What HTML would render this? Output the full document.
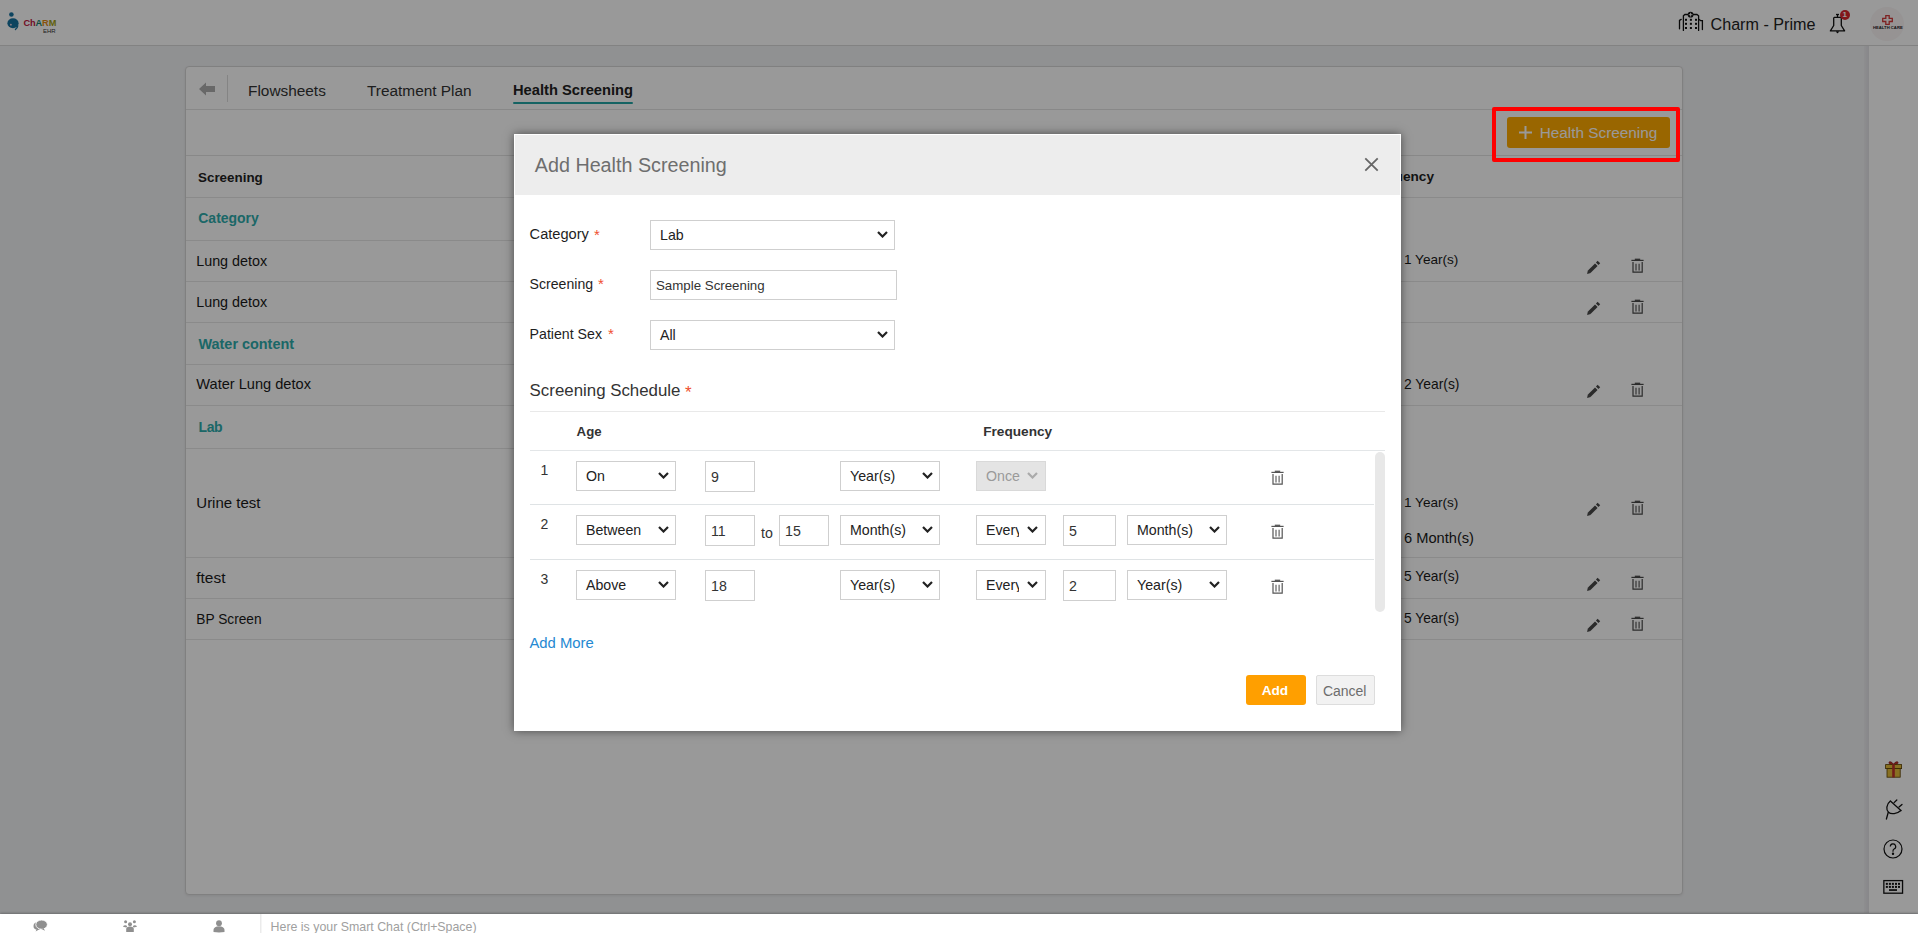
<!DOCTYPE html>
<html><head><meta charset="utf-8">
<style>
html,body{margin:0;padding:0;}
body{width:1918px;height:933px;position:relative;overflow:hidden;background:#f1f2f4;font-family:"Liberation Sans",sans-serif;}
.t{position:absolute;white-space:nowrap;font-family:"Liberation Sans",sans-serif;}
</style></head><body>
<div style="position:absolute;left:0px;top:0px;width:1918px;height:45px;background:#fff;"></div>
<div style="position:absolute;left:0px;top:45px;width:1918px;height:1px;background:#d9d9d9;"></div>
<div style="position:absolute;left:1864px;top:46px;width:5px;height:867px;background:linear-gradient(to right,#ececef,#e2e2e6);"></div>
<div style="position:absolute;left:1869px;top:46px;width:49px;height:867px;background:#fff;"></div>
<svg style="position:absolute;left:3px;top:8px" width="20" height="26" viewBox="0 0 20 26">
<circle cx="8.4" cy="6.5" r="2.3" fill="#17729f"/>
<ellipse cx="10" cy="15.3" rx="5.6" ry="5" fill="#17729f"/>
<path d="M14.8 17.5 C14.5 19.5 13.5 21 12 21.8" stroke="#17729f" stroke-width="1.6" fill="none"/>
<circle cx="7.9" cy="16.7" r="0.9" fill="#f4d0dc"/>
</svg>
<div class="t" style="left:23.5px;top:18px;font-size:9.2px;line-height:10px;font-weight:bold;letter-spacing:-0.1px"><span style="color:#c0173f">Ch</span><span style="color:#17836f">A</span><span style="color:#e38a12">R</span><span style="color:#a0a012">M</span></div>
<div class="t" style="left:43px;top:27.5px;font-size:6px;line-height:7px;color:#333;">EHR</div>
<svg style="position:absolute;left:1674px;top:6px" width="32" height="28" viewBox="0 0 32 28" fill="none" stroke="#111" stroke-width="1.3" stroke-linecap="round">
<path d="M9.4 24.4 V9.8 L10.9 8.5 H14.5 M18.7 8.5 H22.9 L24.6 9.8 V24.4"/>
<path d="M5.5 22.8 V14.4 L7.2 13.4"/><path d="M25 13.4 L26.6 14.6 H28.4 V23.5"/>
<circle cx="16.6" cy="8.7" r="2.9" fill="#111" stroke="none"/>
<path d="M16.6 7.2 V10.2 M15.1 8.7 H18.1" stroke="#fff" stroke-width="0.9"/>
<g fill="#111" stroke="none"><rect x="11" y="12.8" width="2" height="2"/><rect x="15.9" y="12.8" width="2" height="2"/><rect x="21" y="12.8" width="2" height="2"/>
<rect x="11" y="16.8" width="2" height="2"/><rect x="15.9" y="16.8" width="2" height="2"/><rect x="21" y="16.8" width="2" height="2"/>
<rect x="11" y="21" width="2" height="2"/><rect x="15.9" y="21" width="2" height="2"/><rect x="21" y="21" width="2" height="2"/></g>
</svg>
<div class="t" style="left:1710.5px;top:16.23px;font-size:16.15px;line-height:16.15px;color:#222;font-weight:normal;">Charm - Prime</div>
<svg style="position:absolute;left:1829px;top:13px" width="18" height="21" viewBox="0 0 18 21" fill="none" stroke="#111" stroke-width="1.3" stroke-linejoin="round">
<path d="M8.5 1.5 v2.5"/><path d="M7 1.5 h3"/>
<path d="M5.6 4.3 H11.4 L12.3 5 V12.5 L15.6 17.9 H1.4 L4.7 12.5 V5 Z"/>
<path d="M7.5 18.3 L8.5 19.6 L9.5 18.3"/>
</svg>
<div style="position:absolute;left:1839.5px;top:9.8px;width:10.6px;height:10.6px;border-radius:50%;background:#d9262e;color:#fff;font-size:8px;line-height:10.6px;text-align:center;font-weight:bold;font-family:'Liberation Sans',sans-serif">1</div>
<div style="position:absolute;left:1870px;top:7px;width:34px;height:34px;border-radius:50%;background:#faf5f5;"></div>
<svg style="position:absolute;left:1881.5px;top:14.5px" width="11" height="10" viewBox="0 0 11 10" fill="none" stroke="#d23a3a" stroke-width="1.3">
<path d="M3.8 0.7 h3.4 v2.6 h3.1 v3.2 h-3.1 v2.8 h-3.4 v-2.8 h-3.1 v-3.2 h3.1 z"/></svg>
<div class="t" style="left:1873px;top:25.5px;font-size:4.2px;line-height:4px;font-weight:bold;color:#222;width:28px;text-align:center">HEALTH CARE</div>
<div style="position:absolute;left:185px;top:66px;width:1498px;height:829px;background:#fff;border:1px solid #d6d6d6;border-radius:4px;box-sizing:border-box;box-shadow:0 1px 3px rgba(0,0,0,0.08);"></div>
<svg style="position:absolute;left:199px;top:82px" width="17" height="14" viewBox="0 0 17 14">
<path d="M0 7 L7 0.5 V4 H16 V10 H7 V13.5 Z" fill="#adadad"/></svg>
<div style="position:absolute;left:227px;top:75px;width:1px;height:27px;background:#ddd;"></div>
<div class="t" style="left:248px;top:82.76px;font-size:15.4px;line-height:15.4px;color:#333;font-weight:normal;">Flowsheets</div>
<div class="t" style="left:367px;top:82.76px;font-size:15.4px;line-height:15.4px;color:#333;font-weight:normal;">Treatment Plan</div>
<div class="t" style="left:513px;top:83.36px;font-size:14.7px;line-height:14.7px;color:#222;font-weight:bold;">Health Screening</div>
<div style="position:absolute;left:512.5px;top:101.5px;width:120.5px;height:2.5px;background:#23a6a6;border-radius:1px;"></div>
<div style="position:absolute;left:186px;top:109px;width:1496px;height:1px;background:#e3e3e3;"></div>
<div style="position:absolute;left:186px;top:155px;width:1496px;height:1px;background:#e3e3e3;"></div>
<div style="position:absolute;left:1507px;top:117px;width:163px;height:31px;background:#ffab00;border-radius:3px;"></div>
<svg style="position:absolute;left:1518.5px;top:125.5px" width="13" height="13" viewBox="0 0 13 13" stroke="#fff" stroke-width="2"><path d="M6.5 0 V13 M0 6.5 H13"/></svg>
<div class="t" style="left:1539.7px;top:125.31px;font-size:15.34px;line-height:15.34px;color:#fff;font-weight:normal;">Health Screening</div>
<div class="t" style="left:198px;top:171.16px;font-size:13.4px;line-height:13.4px;color:#222;font-weight:bold;">Screening</div>
<div class="t" style="left:1365px;top:170.25px;font-size:13.65px;line-height:13.65px;color:#222;font-weight:bold;">Frequency</div>
<div style="position:absolute;left:186px;top:197px;width:1496px;height:1px;background:#e6e6e6;"></div>
<div style="position:absolute;left:186px;top:281px;width:1496px;height:1px;background:#e6e6e6;"></div>
<div style="position:absolute;left:186px;top:322px;width:1496px;height:1px;background:#e6e6e6;"></div>
<div style="position:absolute;left:186px;top:405px;width:1496px;height:1px;background:#e6e6e6;"></div>
<div style="position:absolute;left:186px;top:557px;width:1496px;height:1px;background:#e6e6e6;"></div>
<div style="position:absolute;left:186px;top:598px;width:1496px;height:1px;background:#e6e6e6;"></div>
<div style="position:absolute;left:186px;top:639px;width:1496px;height:1px;background:#e6e6e6;"></div>
<div style="position:absolute;left:186px;top:240px;width:1200px;height:1px;background:#e6e6e6;"></div>
<div style="position:absolute;left:186px;top:364px;width:1200px;height:1px;background:#e6e6e6;"></div>
<div style="position:absolute;left:186px;top:448px;width:1200px;height:1px;background:#e6e6e6;"></div>
<div class="t" style="left:198.3px;top:212.48px;font-size:13.96px;line-height:13.96px;color:#2eacac;font-weight:bold;">Category</div>
<div class="t" style="left:196.2px;top:253.65px;font-size:14.35px;line-height:14.35px;color:#1a1a1a;font-weight:normal;">Lung detox</div>
<div class="t" style="left:196.2px;top:294.85px;font-size:14.35px;line-height:14.35px;color:#1a1a1a;font-weight:normal;">Lung detox</div>
<div class="t" style="left:198.5px;top:336.79px;font-size:14.42px;line-height:14.42px;color:#2eacac;font-weight:bold;">Water content</div>
<div class="t" style="left:196.3px;top:377.44px;font-size:14.6px;line-height:14.6px;color:#1a1a1a;font-weight:normal;">Water Lung detox</div>
<div class="t" style="left:198.5px;top:419.95px;font-size:14px;line-height:14px;color:#2eacac;font-weight:bold;letter-spacing:-0.4px;">Lab</div>
<div class="t" style="left:196.3px;top:494.90px;font-size:15.0px;line-height:15.0px;color:#1a1a1a;font-weight:normal;">Urine test</div>
<div class="t" style="left:196.3px;top:569.52px;font-size:15.45px;line-height:15.45px;color:#1a1a1a;font-weight:normal;">ftest</div>
<div class="t" style="left:196.3px;top:612.79px;font-size:13.71px;line-height:13.71px;color:#1a1a1a;font-weight:normal;">BP Screen</div>
<div class="t" style="left:1404px;top:253.30px;font-size:13.59px;line-height:13.59px;color:#1a1a1a;font-weight:normal;">1 Year(s)</div>
<div class="t" style="left:1404px;top:377.76px;font-size:13.87px;line-height:13.87px;color:#1a1a1a;font-weight:normal;">2 Year(s)</div>
<div class="t" style="left:1404px;top:495.50px;font-size:13.59px;line-height:13.59px;color:#1a1a1a;font-weight:normal;">1 Year(s)</div>
<div class="t" style="left:1404px;top:530.60px;font-size:14.65px;line-height:14.65px;color:#1a1a1a;font-weight:normal;">6 Month(s)</div>
<div class="t" style="left:1404px;top:570.33px;font-size:13.79px;line-height:13.79px;color:#1a1a1a;font-weight:normal;">5 Year(s)</div>
<div class="t" style="left:1404px;top:611.63px;font-size:13.79px;line-height:13.79px;color:#1a1a1a;font-weight:normal;">5 Year(s)</div>
<svg style="position:absolute;left:1586px;top:260px" width="15" height="15" viewBox="0 0 15 15"><path d="M1.1 13.9 L1.9 10.3 L4.7 13.1 Z" fill="#484848"/><path d="M3.2 11.8 L10.3 4.7" stroke="#484848" stroke-width="3.6"/><path d="M11.2 3.8 L12.9 2.1" stroke="#484848" stroke-width="3.6"/></svg>
<svg style="position:absolute;left:1630.5px;top:257.8px" width="13" height="15" viewBox="0 0 13 15" fill="none" stroke="#4a4a4a"><path d="M0.4 2.4 H12.6" stroke-width="1.2"/><path d="M3.8 1.3 H9.2" stroke-width="1.3"/><path d="M2 3.9 V14.1 H11.2 V3.9" stroke-width="1.2"/><path d="M5 5.8 V12.6 M8.1 5.8 V12.6" stroke-width="1.1"/></svg>
<svg style="position:absolute;left:1586px;top:301px" width="15" height="15" viewBox="0 0 15 15"><path d="M1.1 13.9 L1.9 10.3 L4.7 13.1 Z" fill="#484848"/><path d="M3.2 11.8 L10.3 4.7" stroke="#484848" stroke-width="3.6"/><path d="M11.2 3.8 L12.9 2.1" stroke="#484848" stroke-width="3.6"/></svg>
<svg style="position:absolute;left:1630.5px;top:298.8px" width="13" height="15" viewBox="0 0 13 15" fill="none" stroke="#4a4a4a"><path d="M0.4 2.4 H12.6" stroke-width="1.2"/><path d="M3.8 1.3 H9.2" stroke-width="1.3"/><path d="M2 3.9 V14.1 H11.2 V3.9" stroke-width="1.2"/><path d="M5 5.8 V12.6 M8.1 5.8 V12.6" stroke-width="1.1"/></svg>
<svg style="position:absolute;left:1586px;top:384px" width="15" height="15" viewBox="0 0 15 15"><path d="M1.1 13.9 L1.9 10.3 L4.7 13.1 Z" fill="#484848"/><path d="M3.2 11.8 L10.3 4.7" stroke="#484848" stroke-width="3.6"/><path d="M11.2 3.8 L12.9 2.1" stroke="#484848" stroke-width="3.6"/></svg>
<svg style="position:absolute;left:1630.5px;top:381.8px" width="13" height="15" viewBox="0 0 13 15" fill="none" stroke="#4a4a4a"><path d="M0.4 2.4 H12.6" stroke-width="1.2"/><path d="M3.8 1.3 H9.2" stroke-width="1.3"/><path d="M2 3.9 V14.1 H11.2 V3.9" stroke-width="1.2"/><path d="M5 5.8 V12.6 M8.1 5.8 V12.6" stroke-width="1.1"/></svg>
<svg style="position:absolute;left:1586px;top:502px" width="15" height="15" viewBox="0 0 15 15"><path d="M1.1 13.9 L1.9 10.3 L4.7 13.1 Z" fill="#484848"/><path d="M3.2 11.8 L10.3 4.7" stroke="#484848" stroke-width="3.6"/><path d="M11.2 3.8 L12.9 2.1" stroke="#484848" stroke-width="3.6"/></svg>
<svg style="position:absolute;left:1630.5px;top:499.8px" width="13" height="15" viewBox="0 0 13 15" fill="none" stroke="#4a4a4a"><path d="M0.4 2.4 H12.6" stroke-width="1.2"/><path d="M3.8 1.3 H9.2" stroke-width="1.3"/><path d="M2 3.9 V14.1 H11.2 V3.9" stroke-width="1.2"/><path d="M5 5.8 V12.6 M8.1 5.8 V12.6" stroke-width="1.1"/></svg>
<svg style="position:absolute;left:1586px;top:577px" width="15" height="15" viewBox="0 0 15 15"><path d="M1.1 13.9 L1.9 10.3 L4.7 13.1 Z" fill="#484848"/><path d="M3.2 11.8 L10.3 4.7" stroke="#484848" stroke-width="3.6"/><path d="M11.2 3.8 L12.9 2.1" stroke="#484848" stroke-width="3.6"/></svg>
<svg style="position:absolute;left:1630.5px;top:574.8px" width="13" height="15" viewBox="0 0 13 15" fill="none" stroke="#4a4a4a"><path d="M0.4 2.4 H12.6" stroke-width="1.2"/><path d="M3.8 1.3 H9.2" stroke-width="1.3"/><path d="M2 3.9 V14.1 H11.2 V3.9" stroke-width="1.2"/><path d="M5 5.8 V12.6 M8.1 5.8 V12.6" stroke-width="1.1"/></svg>
<svg style="position:absolute;left:1586px;top:618px" width="15" height="15" viewBox="0 0 15 15"><path d="M1.1 13.9 L1.9 10.3 L4.7 13.1 Z" fill="#484848"/><path d="M3.2 11.8 L10.3 4.7" stroke="#484848" stroke-width="3.6"/><path d="M11.2 3.8 L12.9 2.1" stroke="#484848" stroke-width="3.6"/></svg>
<svg style="position:absolute;left:1630.5px;top:615.8px" width="13" height="15" viewBox="0 0 13 15" fill="none" stroke="#4a4a4a"><path d="M0.4 2.4 H12.6" stroke-width="1.2"/><path d="M3.8 1.3 H9.2" stroke-width="1.3"/><path d="M2 3.9 V14.1 H11.2 V3.9" stroke-width="1.2"/><path d="M5 5.8 V12.6 M8.1 5.8 V12.6" stroke-width="1.1"/></svg>
<svg style="position:absolute;left:1875px;top:755px" width="36" height="70" viewBox="0 0 36 70">
<path d="M18.5 9.8 C15 9.5 13.5 8.5 14 7.3 C14.6 6 17 7 18.5 9.2 C20 7 22.4 6 23 7.3 C23.5 8.5 22 9.5 18.5 9.8 Z" fill="#c0302a" stroke="#8a1a1a" stroke-width="0.8"/>
<rect x="10.6" y="9.6" width="16" height="4" fill="#e3bb3a" stroke="#5a4000" stroke-width="0.8"/>
<rect x="12" y="13.6" width="13.2" height="8.6" fill="#e3bb3a" stroke="#5a4000" stroke-width="0.8"/>
<rect x="17.2" y="9.2" width="2.6" height="13.2" fill="#c0302a"/>
<g fill="none" stroke="#111" stroke-width="1.3" stroke-linecap="round">
<path d="M15.4 46.1 L25.9 55.5"/><path d="M15.4 46.1 C11 49.5 11 55 13.5 57.3 C16 59.6 22 59 25.9 55.5"/>
<path d="M19.1 47.6 L21.8 45 M24 52.1 L27 49.5"/><path d="M13.2 57.5 L11.4 64"/></g>
</svg>
<svg style="position:absolute;left:1882px;top:838px" width="22" height="22" viewBox="0 0 22 22" fill="none" stroke="#111" stroke-width="1.2"><circle cx="11" cy="11" r="9"/><path d="M8.3 8.5 a2.7 2.7 0 1 1 3.8 2.5 c-0.8 0.4 -1.1 1 -1.1 2 v0.8" /><circle cx="11" cy="15.8" r="0.6" fill="#111"/></svg>
<svg style="position:absolute;left:1883px;top:879px" width="21" height="16" viewBox="0 0 21 16"><rect x="0.85" y="1.6" width="18.7" height="12.6" fill="none" stroke="#111" stroke-width="1.3"/><g fill="#111"><rect x="2.85" y="3.85" width="2" height="2"/><rect x="5.9" y="3.85" width="2" height="2"/><rect x="8.9" y="3.85" width="2" height="2"/><rect x="12" y="3.85" width="2" height="2"/><rect x="15" y="3.85" width="2" height="2"/><rect x="2.85" y="6.9" width="2" height="2"/><rect x="5.9" y="6.9" width="2" height="2"/><rect x="8.9" y="6.9" width="2" height="2"/><rect x="12" y="6.9" width="2" height="2"/><rect x="15" y="6.9" width="2" height="2"/><rect x="6" y="10.2" width="8" height="1.7"/></g></svg>
<div style="position:absolute;left:0px;top:0px;width:1918px;height:933px;background:rgba(0,0,0,0.4);"></div>
<div style="position:absolute;left:514px;top:134px;width:887px;height:597px;background:#fff;box-shadow:0 0 9px rgba(0,0,0,0.5);"></div>
<div style="position:absolute;left:515px;top:135px;width:885px;height:60px;background:#ededed;"></div>
<div class="t" style="left:534.8px;top:155.89px;font-size:19.74px;line-height:19.74px;color:#6e6e6e;font-weight:normal;">Add Health Screening</div>
<svg style="position:absolute;left:1363.5px;top:156.5px" width="15" height="15" viewBox="0 0 15 15" stroke="#666" stroke-width="1.8"><path d="M1.3 1.3 L13.7 13.7 M13.7 1.3 L1.3 13.7"/></svg>
<div class="t" style="left:529.6px;top:227.01px;font-size:14.64px;line-height:14.64px;color:#1e1e1e;font-weight:normal;">Category</div>
<div class="t" style="left:594px;top:226.70px;font-size:15px;line-height:15px;color:#ef5030;font-weight:normal;">*</div>
<div class="t" style="left:529.6px;top:277.06px;font-size:14.1px;line-height:14.1px;color:#1e1e1e;font-weight:normal;">Screening</div>
<div class="t" style="left:598px;top:276.30px;font-size:15px;line-height:15px;color:#ef5030;font-weight:normal;">*</div>
<div class="t" style="left:529.6px;top:326.61px;font-size:14.16px;line-height:14.16px;color:#1e1e1e;font-weight:normal;">Patient Sex</div>
<div class="t" style="left:608px;top:325.90px;font-size:15px;line-height:15px;color:#ef5030;font-weight:normal;">*</div>
<div style="position:absolute;left:650px;top:220px;width:245px;height:30px;background:#fff;border:1px solid #cfcfcf;box-sizing:border-box;"></div>
<div class="t" style="left:660px;top:228.18px;font-size:14.2px;line-height:14.2px;color:#222;font-weight:normal;">Lab</div>
<svg style="position:absolute;left:877px;top:231.0px" width="11" height="7" viewBox="0 0 11 7" fill="none" stroke="#222" stroke-width="2.2"><path d="M1 1 L5.5 5.5 L10 1"/></svg>
<div style="position:absolute;left:650px;top:270px;width:247px;height:30px;background:#fff;border:1px solid #cfcfcf;box-sizing:border-box;"></div>
<div class="t" style="left:656px;top:278.94px;font-size:13.3px;line-height:13.3px;color:#333;font-weight:normal;">Sample Screening</div>
<div style="position:absolute;left:650px;top:320px;width:245px;height:30px;background:#fff;border:1px solid #cfcfcf;box-sizing:border-box;"></div>
<div class="t" style="left:660px;top:328.18px;font-size:14.2px;line-height:14.2px;color:#222;font-weight:normal;">All</div>
<svg style="position:absolute;left:877px;top:331.0px" width="11" height="7" viewBox="0 0 11 7" fill="none" stroke="#222" stroke-width="2.2"><path d="M1 1 L5.5 5.5 L10 1"/></svg>
<div class="t" style="left:529.6px;top:382.52px;font-size:16.87px;line-height:16.87px;color:#333;font-weight:normal;">Screening Schedule</div>
<div class="t" style="left:685px;top:383.61px;font-size:17px;line-height:17px;color:#ef5030;font-weight:normal;">*</div>
<div style="position:absolute;left:530px;top:411px;width:855px;height:1px;background:#e9e9e9;"></div>
<div class="t" style="left:576.6px;top:425.00px;font-size:13.23px;line-height:13.23px;color:#333;font-weight:bold;">Age</div>
<div class="t" style="left:983.2px;top:424.75px;font-size:13.65px;line-height:13.65px;color:#333;font-weight:bold;">Frequency</div>
<div style="position:absolute;left:530px;top:450px;width:855px;height:1px;background:#e3e6e8;"></div>
<div style="position:absolute;left:530px;top:504px;width:844px;height:1px;background:#dfe3e5;"></div>
<div style="position:absolute;left:530px;top:559px;width:844px;height:1px;background:#dfe3e5;"></div>
<div style="position:absolute;left:1374.5px;top:451.5px;width:10px;height:160px;background:#e8e8e8;border-radius:5px;"></div>
<div class="t" style="left:540.6px;top:462.95px;font-size:14px;line-height:14px;color:#333;font-weight:normal;">1</div>
<div style="position:absolute;left:576px;top:461px;width:100px;height:29.5px;background:#fff;border:1px solid #cfcfcf;box-sizing:border-box;"></div>
<div class="t" style="left:586px;top:468.93px;font-size:14.2px;line-height:14.2px;color:#222;font-weight:normal;">On</div>
<svg style="position:absolute;left:658px;top:471.75px" width="11" height="7" viewBox="0 0 11 7" fill="none" stroke="#222" stroke-width="2.2"><path d="M1 1 L5.5 5.5 L10 1"/></svg>
<div style="position:absolute;left:705px;top:461px;width:50px;height:31px;background:#fff;border:1px solid #cfcfcf;box-sizing:border-box;"></div>
<div class="t" style="left:711px;top:469.68px;font-size:14.2px;line-height:14.2px;color:#333;font-weight:normal;">9</div>
<div style="position:absolute;left:840px;top:461px;width:100px;height:29.5px;background:#fff;border:1px solid #cfcfcf;box-sizing:border-box;"></div>
<div class="t" style="left:850px;top:468.93px;font-size:14.2px;line-height:14.2px;color:#222;font-weight:normal;">Year(s)</div>
<svg style="position:absolute;left:922px;top:471.75px" width="11" height="7" viewBox="0 0 11 7" fill="none" stroke="#222" stroke-width="2.2"><path d="M1 1 L5.5 5.5 L10 1"/></svg>
<div style="position:absolute;left:976px;top:461px;width:70px;height:29.5px;background:#e4e4e4;border:1px solid #d9d9d9;box-sizing:border-box;"></div>
<div class="t" style="left:986px;top:468.93px;font-size:14.2px;line-height:14.2px;color:#9a9a9a;font-weight:normal;">Once</div>
<svg style="position:absolute;left:1027px;top:471.75px" width="11" height="7" viewBox="0 0 11 7" fill="none" stroke="#aaa" stroke-width="2.2"><path d="M1 1 L5.5 5.5 L10 1"/></svg>
<svg style="position:absolute;left:1270.5px;top:469.5px" width="13" height="15" viewBox="0 0 13 15" fill="none" stroke="#555"><path d="M0.4 2.4 H12.6" stroke-width="1.2"/><path d="M3.8 1.3 H9.2" stroke-width="1.3"/><path d="M2 3.9 V14.1 H11.2 V3.9" stroke-width="1.2"/><path d="M5 5.8 V12.6 M8.1 5.8 V12.6" stroke-width="1.1"/></svg>
<div class="t" style="left:540.6px;top:516.95px;font-size:14px;line-height:14px;color:#333;font-weight:normal;">2</div>
<div style="position:absolute;left:576px;top:515px;width:100px;height:29.5px;background:#fff;border:1px solid #cfcfcf;box-sizing:border-box;"></div>
<div class="t" style="left:586px;top:522.93px;font-size:14.2px;line-height:14.2px;color:#222;font-weight:normal;">Between</div>
<svg style="position:absolute;left:658px;top:525.75px" width="11" height="7" viewBox="0 0 11 7" fill="none" stroke="#222" stroke-width="2.2"><path d="M1 1 L5.5 5.5 L10 1"/></svg>
<div style="position:absolute;left:705px;top:515px;width:50px;height:31px;background:#fff;border:1px solid #cfcfcf;box-sizing:border-box;"></div>
<div class="t" style="left:711px;top:523.68px;font-size:14.2px;line-height:14.2px;color:#333;font-weight:normal;">11</div>
<div class="t" style="left:761px;top:525.58px;font-size:14.2px;line-height:14.2px;color:#333;font-weight:normal;">to</div>
<div style="position:absolute;left:779px;top:515px;width:50px;height:31px;background:#fff;border:1px solid #cfcfcf;box-sizing:border-box;"></div>
<div class="t" style="left:785px;top:523.68px;font-size:14.2px;line-height:14.2px;color:#333;font-weight:normal;">15</div>
<div style="position:absolute;left:840px;top:515px;width:100px;height:29.5px;background:#fff;border:1px solid #cfcfcf;box-sizing:border-box;"></div>
<div class="t" style="left:850px;top:522.93px;font-size:14.2px;line-height:14.2px;color:#222;font-weight:normal;">Month(s)</div>
<svg style="position:absolute;left:922px;top:525.75px" width="11" height="7" viewBox="0 0 11 7" fill="none" stroke="#222" stroke-width="2.2"><path d="M1 1 L5.5 5.5 L10 1"/></svg>
<div style="position:absolute;left:976px;top:515px;width:70px;height:29.5px;background:#fff;border:1px solid #cfcfcf;box-sizing:border-box;"></div>
<div class="t" style="left:986px;top:522.93px;font-size:14.2px;line-height:14.2px;color:#222;font-weight:normal;width:33px;overflow:hidden;white-space:nowrap;">Every</div>
<svg style="position:absolute;left:1027px;top:525.75px" width="11" height="7" viewBox="0 0 11 7" fill="none" stroke="#222" stroke-width="2.2"><path d="M1 1 L5.5 5.5 L10 1"/></svg>
<div style="position:absolute;left:1063px;top:515px;width:53px;height:31px;background:#fff;border:1px solid #cfcfcf;box-sizing:border-box;"></div>
<div class="t" style="left:1069px;top:523.68px;font-size:14.2px;line-height:14.2px;color:#333;font-weight:normal;">5</div>
<div style="position:absolute;left:1127px;top:515px;width:100px;height:29.5px;background:#fff;border:1px solid #cfcfcf;box-sizing:border-box;"></div>
<div class="t" style="left:1137px;top:522.93px;font-size:14.2px;line-height:14.2px;color:#222;font-weight:normal;">Month(s)</div>
<svg style="position:absolute;left:1209px;top:525.75px" width="11" height="7" viewBox="0 0 11 7" fill="none" stroke="#222" stroke-width="2.2"><path d="M1 1 L5.5 5.5 L10 1"/></svg>
<svg style="position:absolute;left:1270.5px;top:523.5px" width="13" height="15" viewBox="0 0 13 15" fill="none" stroke="#555"><path d="M0.4 2.4 H12.6" stroke-width="1.2"/><path d="M3.8 1.3 H9.2" stroke-width="1.3"/><path d="M2 3.9 V14.1 H11.2 V3.9" stroke-width="1.2"/><path d="M5 5.8 V12.6 M8.1 5.8 V12.6" stroke-width="1.1"/></svg>
<div class="t" style="left:540.6px;top:571.95px;font-size:14px;line-height:14px;color:#333;font-weight:normal;">3</div>
<div style="position:absolute;left:576px;top:570px;width:100px;height:29.5px;background:#fff;border:1px solid #cfcfcf;box-sizing:border-box;"></div>
<div class="t" style="left:586px;top:577.93px;font-size:14.2px;line-height:14.2px;color:#222;font-weight:normal;">Above</div>
<svg style="position:absolute;left:658px;top:580.75px" width="11" height="7" viewBox="0 0 11 7" fill="none" stroke="#222" stroke-width="2.2"><path d="M1 1 L5.5 5.5 L10 1"/></svg>
<div style="position:absolute;left:705px;top:570px;width:50px;height:31px;background:#fff;border:1px solid #cfcfcf;box-sizing:border-box;"></div>
<div class="t" style="left:711px;top:578.68px;font-size:14.2px;line-height:14.2px;color:#333;font-weight:normal;">18</div>
<div style="position:absolute;left:840px;top:570px;width:100px;height:29.5px;background:#fff;border:1px solid #cfcfcf;box-sizing:border-box;"></div>
<div class="t" style="left:850px;top:577.93px;font-size:14.2px;line-height:14.2px;color:#222;font-weight:normal;">Year(s)</div>
<svg style="position:absolute;left:922px;top:580.75px" width="11" height="7" viewBox="0 0 11 7" fill="none" stroke="#222" stroke-width="2.2"><path d="M1 1 L5.5 5.5 L10 1"/></svg>
<div style="position:absolute;left:976px;top:570px;width:70px;height:29.5px;background:#fff;border:1px solid #cfcfcf;box-sizing:border-box;"></div>
<div class="t" style="left:986px;top:577.93px;font-size:14.2px;line-height:14.2px;color:#222;font-weight:normal;width:33px;overflow:hidden;white-space:nowrap;">Every</div>
<svg style="position:absolute;left:1027px;top:580.75px" width="11" height="7" viewBox="0 0 11 7" fill="none" stroke="#222" stroke-width="2.2"><path d="M1 1 L5.5 5.5 L10 1"/></svg>
<div style="position:absolute;left:1063px;top:570px;width:53px;height:31px;background:#fff;border:1px solid #cfcfcf;box-sizing:border-box;"></div>
<div class="t" style="left:1069px;top:578.68px;font-size:14.2px;line-height:14.2px;color:#333;font-weight:normal;">2</div>
<div style="position:absolute;left:1127px;top:570px;width:100px;height:29.5px;background:#fff;border:1px solid #cfcfcf;box-sizing:border-box;"></div>
<div class="t" style="left:1137px;top:577.93px;font-size:14.2px;line-height:14.2px;color:#222;font-weight:normal;">Year(s)</div>
<svg style="position:absolute;left:1209px;top:580.75px" width="11" height="7" viewBox="0 0 11 7" fill="none" stroke="#222" stroke-width="2.2"><path d="M1 1 L5.5 5.5 L10 1"/></svg>
<svg style="position:absolute;left:1270.5px;top:578.5px" width="13" height="15" viewBox="0 0 13 15" fill="none" stroke="#555"><path d="M0.4 2.4 H12.6" stroke-width="1.2"/><path d="M3.8 1.3 H9.2" stroke-width="1.3"/><path d="M2 3.9 V14.1 H11.2 V3.9" stroke-width="1.2"/><path d="M5 5.8 V12.6 M8.1 5.8 V12.6" stroke-width="1.1"/></svg>
<div class="t" style="left:529.4px;top:635.72px;font-size:14.86px;line-height:14.86px;color:#2589d2;font-weight:normal;">Add More</div>
<div style="position:absolute;left:1246px;top:675px;width:60px;height:30px;background:#ff9f00;border-radius:3px;"></div>
<div class="t" style="left:1261.7px;top:684.26px;font-size:13.63px;line-height:13.63px;color:#fff;font-weight:bold;">Add</div>
<div style="position:absolute;left:1316px;top:675px;width:59px;height:30px;background:#f2f2f2;border:1px solid #ddd;border-radius:2px;box-sizing:border-box;"></div>
<div class="t" style="left:1322.9px;top:683.94px;font-size:14.01px;line-height:14.01px;color:#6d6d6d;font-weight:normal;">Cancel</div>
<div style="position:absolute;left:1492px;top:107px;width:188px;height:55px;border:4px solid #ff0000;box-sizing:border-box;border-radius:2px;"></div>
<div style="position:absolute;left:0px;top:913.5px;width:1918px;height:20px;background:#fff;box-shadow:0 -1px 2px rgba(0,0,0,0.25);"></div>
<div style="position:absolute;left:260px;top:914px;width:2px;height:19px;background:linear-gradient(to right,#e6e6e6,#fafafa);"></div>
<div class="t" style="left:270.6px;top:921.22px;font-size:12.38px;line-height:12.38px;color:#a0a0a0;font-weight:normal;">Here is your Smart Chat (Ctrl+Space)</div>
<svg style="position:absolute;left:32.5px;top:919.5px" width="15" height="12" viewBox="0 0 15 12" fill="#8f8f8f"><ellipse cx="4.8" cy="6" rx="4.3" ry="3.8"/><ellipse cx="8.6" cy="4.6" rx="5.8" ry="4.6" stroke="#fff" stroke-width="0.9"/><path d="M2.6 11.5 L4 8.6 L6 9.4 Z M12 10.8 L10.5 8 L8.5 9 Z"/></svg>
<svg style="position:absolute;left:122.5px;top:920px" width="14" height="12" viewBox="0 0 14 12" fill="#8f8f8f"><circle cx="7" cy="4.2" r="2"/><circle cx="2.6" cy="1.8" r="1.5"/><circle cx="11.4" cy="1.8" r="1.5"/><path d="M3.2 12 V9 a3.8 2.6 0 0 1 7.6 0 V12 Z"/><path d="M0 6.8 a2.2 1.8 0 0 1 4.2 -0.4 L3.4 7.4 Z M14 6.8 a2.2 1.8 0 0 0 -4.2 -0.4 L10.6 7.4 Z"/></svg>
<svg style="position:absolute;left:212.5px;top:919.5px" width="12" height="13" viewBox="0 0 12 13" fill="#8f8f8f"><circle cx="6" cy="3.2" r="2.9"/><path d="M0.5 12 V9.8 a5.5 3.6 0 0 1 11 0 V12 Q6 12.8 0.5 12 Z"/></svg>
</body></html>
